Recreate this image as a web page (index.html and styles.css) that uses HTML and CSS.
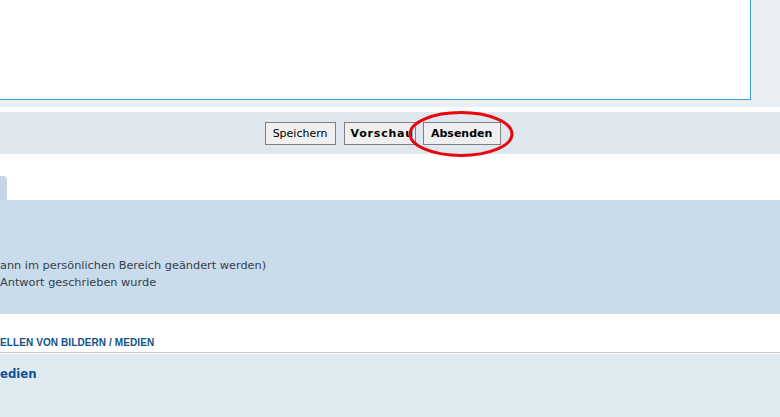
FILE: index.html
```html
<!DOCTYPE html>
<html lang="de">
<head>
  <meta charset="UTF-8">
  <title>Antwort schreiben</title>
  <link rel="stylesheet" href="styles.css">
</head>
<body>
  <div class="editor">
    <div class="textarea"></div>
  </div>

  <div class="buttonbar">
    <button type="button" class="btn">Speichern</button>
    <button type="button" class="btn btn-bold btn-preview">Vorschau</button>
    <button type="button" class="btn btn-bold btn-marked">Absenden
      <svg class="mark" width="106" height="48" viewBox="0 0 106 48">
        <ellipse cx="53" cy="23" rx="51" ry="21.5" fill="none" stroke="#e8070a" stroke-width="3"/>
      </svg>
    </button>
  </div>

  <div class="tabs">
    <span class="tab"></span>
  </div>

  <div class="options">
    <div class="option">ann im persönlichen Bereich geändert werden)</div>
    <div class="option">Antwort geschrieben wurde</div>
  </div>

  <h3 class="section-title">ELLEN VON BILDERN / MEDIEN</h3>

  <div class="media">
    <h4 class="media-title">edien</h4>
  </div>
</body>
</html>
```

FILE: styles.css
```css
body {
  margin: 0;
  font-family: "DejaVu Sans", Verdana, sans-serif;
  background-color: #fff;
  overflow: hidden;
}
.editor {
  background-color: #eaeff3;
  height: 107px;
}
.textarea {
  width: 750px;
  height: 99px;
  background-color: #fff;
  border-right: 1px solid #3d9bd6;
  border-bottom: 1px solid #3d9bd6;
}
.buttonbar {
  margin-top: 5px;
  height: 42px;
  background-color: #dfe8ef;
  display: flex;
  justify-content: center;
  align-items: center;
  gap: 8px;
  padding-right: 14px;
}
.btn {
  font-family: "DejaVu Sans", Verdana, sans-serif;
  font-size: 11px;
  color: #000;
  background-color: #efefef;
  border: 1px solid #808080;
  border-radius: 0;
  height: 23px;
  padding: 0 7px;
  margin: 0;
}
.btn-bold {
  font-weight: bold;
  padding: 0 8px 0 7px;
}
.btn-preview {
  letter-spacing: 0.8px;
  padding: 0 1px 0 6px;
  margin-right: -1px;
}
.btn-marked {
  position: relative;
}
.mark {
  position: absolute;
  left: -16px;
  top: -12px;
}
.tabs {
  height: 24px;
  margin-top: 22px;
}
.tab {
  display: block;
  width: 7px;
  height: 24px;
  background-color: #c3d5e6;
  border-top-right-radius: 4px;
}
.options {
  background-color: #cadbeb;
  height: 114px;
  padding-top: 57px;
  box-sizing: border-box;
  color: #343d4c;
  font-size: 11.3px;
  line-height: 17px;
}
.section-title {
  margin: 0;
  height: 39px;
  padding-top: 21px;
  box-sizing: border-box;
  font-family: "Liberation Sans", Arial, sans-serif;
  font-size: 10px;
  font-weight: bold;
  letter-spacing: 0.1px;
  line-height: 16px;
  color: #105289;
  border-bottom: 1px solid #c8c8c8;
}
.media {
  margin-top: 1px;
  background-color: #e0eaf1;
  height: 70px;
  padding-top: 12px;
  box-sizing: border-box;
}
.media-title {
  margin: 0;
  font-family: "DejaVu Sans Condensed", "DejaVu Sans", sans-serif;
  font-size: 13px;
  font-weight: bold;
  color: #115098;
  line-height: 16px;
}
```
